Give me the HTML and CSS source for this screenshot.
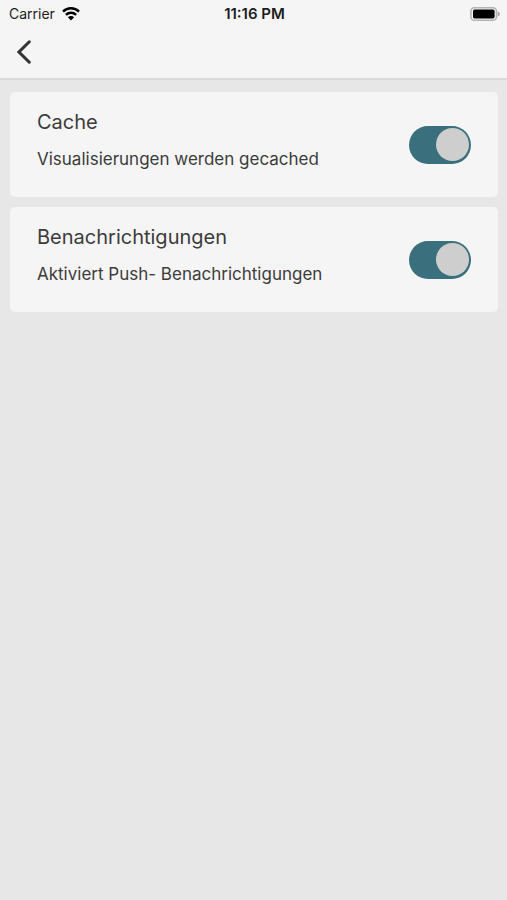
FILE: index.html
```html
<!DOCTYPE html>
<html lang="de">
<head>
  <meta charset="utf-8">
  <meta name="viewport" content="width=device-width, initial-scale=1">
  <title>Einstellungen</title>
  <link rel="stylesheet" href="styles.css">
</head>
<body>
  <header class="header">
    <div class="status-bar">
      <div class="carrier">
        <span>Carrier</span>
        <svg class="wifi" viewBox="0 0 18 14" aria-hidden="true">
          <path d="M1 4.6A11.4 11.4 0 0 1 17 4.6M3.9 7.8A7.3 7.3 0 0 1 14.1 7.8" fill="none" stroke="currentColor" stroke-width="2.4"/>
          <path d="M9 13.4L5.9 10.3A4.4 4.4 0 0 1 12.1 10.3Z" fill="currentColor"/>
        </svg>
      </div>
      <time class="time">11:16 PM</time>
      <svg class="battery" viewBox="0 0 30 14" aria-hidden="true">
        <rect x="0.9" y="0.7" width="25.6" height="12.6" rx="3.6" fill="none" stroke="#b4b4b4" stroke-width="1.6"/>
        <rect x="3" y="2.6" width="21.6" height="8.8" rx="1.6" fill="#000"/>
        <path d="M27.6 4.6Q30 5.4 30 7T27.6 9.4Z" fill="#a9a9a9"/>
      </svg>
    </div>
    <nav class="nav">
      <button class="back" type="button" aria-label="Zurück">
        <svg class="chevron" viewBox="0 0 14 24" aria-hidden="true">
          <path d="M12.3 1.8L2 12L12.3 22.2" fill="none" stroke="currentColor" stroke-width="3" stroke-linecap="round" stroke-linejoin="miter"/>
        </svg>
      </button>
    </nav>
  </header>
  <main class="settings">
    <section class="card">
      <div class="card-text">
        <label class="card-title" for="cache">Cache</label>
        <p class="card-note" id="cache-note">Visualisierungen werden gecached</p>
      </div>
      <input class="switch" id="cache" type="checkbox" role="switch" aria-describedby="cache-note" checked>
    </section>
    <section class="card">
      <div class="card-text">
        <label class="card-title" for="push">Benachrichtigungen</label>
        <p class="card-note" id="push-note">Aktiviert Push- Benachrichtigungen</p>
      </div>
      <input class="switch" id="push" type="checkbox" role="switch" aria-describedby="push-note" checked>
    </section>
  </main>
</body>
</html>
```
FILE: styles.css
```css
* {
  box-sizing: border-box;
}

body {
  margin: 0;
  min-height: 100vh;
  background: #e7e7e7;
  color: #3c3c3c;
  font-family: Inter, "Liberation Sans", sans-serif;
}

.header {
  background: #f5f5f5;
  border-bottom: 2px solid #dadada;
}

.status-bar {
  display: grid;
  grid-template-columns: 1fr auto 1fr;
  align-items: center;
  height: 27px;
  padding: 0 7px 0 9px;
  color: #1c1c1c;
  font-size: 14px;
  line-height: 18px;
}

.carrier {
  display: flex;
  align-items: center;
  gap: 7px;
}

.wifi {
  width: 18px;
  height: 14px;
  color: #000;
}

.time {
  font-size: 15px;
  font-weight: 600;
}

.battery {
  justify-self: end;
  width: 30px;
  height: 14px;
}

.nav {
  display: flex;
  align-items: flex-start;
  height: 51px;
  padding: 5px 9px 0;
}

.back {
  display: flex;
  padding: 8px;
  border: 0;
  background: none;
  color: #333;
}

.chevron {
  width: 14px;
  height: 24px;
}

.settings {
  display: flex;
  flex-direction: column;
  gap: 10px;
  padding: 12px 9px 12px 10px;
}

.card {
  display: flex;
  align-items: center;
  justify-content: space-between;
  padding: 0 27px;
  border-radius: 5px;
  background: #f5f5f5;
}

.card-text {
  display: flex;
  flex-direction: column;
  gap: 11px;
  padding: 16px 0 26px;
}

.card-title {
  font-size: 20px;
  line-height: 28px;
}

.card-note {
  margin: 0;
  font-size: 17px;
  line-height: 24px;
}

.switch {
  appearance: none;
  display: flex;
  align-items: center;
  flex: none;
  width: 62px;
  height: 38px;
  margin: 0;
  padding: 2px;
  border-radius: 19px;
  background: #b5b5b5;
}

.switch::before {
  content: "";
  width: 33px;
  height: 33px;
  border-radius: 50%;
  background: #cecece;
}

.switch:checked {
  justify-content: flex-end;
  background: #3a707e;
}
```
